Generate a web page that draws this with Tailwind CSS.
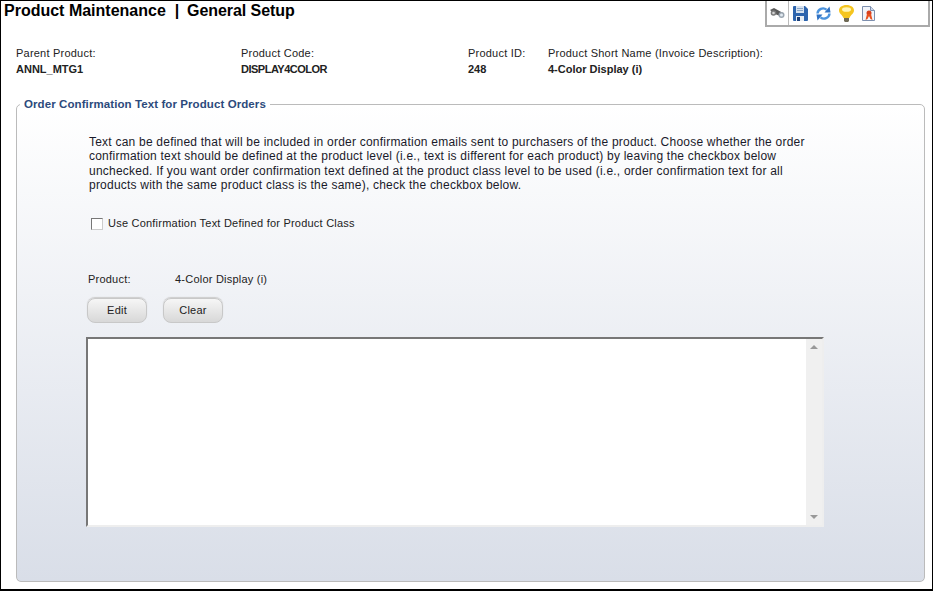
<!DOCTYPE html>
<html lang="en">
<head>
    <meta charset="UTF-8">
    <title>Product Maintenance</title>
    <script src="https://cdn.jsdelivr.net/npm/@tailwindcss/browser@4"></script>
</head>
<body class="bg-white">
<div class="h-[591px] w-[933px] overflow-hidden border border-b-2 border-black bg-white text-[11px] leading-[13px] tracking-[0.22px] text-[#222] font-['Liberation_Sans',Arial,sans-serif]">
    <!-- title + toolbar -->
    <div class="flex justify-between h-[27px]">
        <h1 class="pl-[3px] pt-[1px] text-[16px] leading-[18px] font-bold tracking-normal text-black whitespace-pre">Product Maintenance  |  <span class="-ml-[1px] tracking-[-0.06px]">General Setup</span></h1>
        <div class="flex items-center h-[26px] w-[165px] mr-[2px] border-b-2 border-x-2 border-[#aaa]">
            <div class="flex items-center justify-center w-[22px] h-full border-r border-[#bbb]">
                <svg width="17" height="12" viewBox="0 0 17 12"><path d="M1 3 5 1l9 5-3 3-5-2z" fill="#5a5a5a"/><circle cx="4.500" cy="6" r="2.800" fill="#7a7a7a"/><circle cx="12.500" cy="8" r="3" fill="#9aa5b0"/><circle cx="12.500" cy="8" r="1.500" fill="#e3ebf2"/><circle cx="4.500" cy="6" r="1.300" fill="#d6d6d6"/></svg>
            </div>
            <div class="flex items-center gap-[8px] pl-[4px]">
                <svg width="15" height="15" viewBox="0 0 15 15"><path d="M0 1q0-1 1-1h11l3 3v11q0 1-1 1H1q-1 0-1-1z" fill="#2d64ad"/><path d="M3 0h8v7H3z" fill="#d7e2ef"/><path d="M4 2h6v1H4zM4 4h6v1H4z" fill="#8aa6c8"/><path d="M3 10h8v5H3z" fill="#e8edf3"/><path d="M4 11h3v4H4z" fill="#1c3f78"/></svg>
                <svg width="15" height="15" viewBox="0 0 15 15" fill="none" stroke="#4b93dd" stroke-width="2.400"><path d="M1.500 7.500a5.500 5.500 0 0 1 9-3.800"/><path d="M13.500 7.500a5.500 5.500 0 0 1-9 3.800"/><path d="M8.500 6.500h6l-1-6z" fill="#2f72c4" stroke="none"/><path d="M6.500 8.500h-6l1 6z" fill="#2f72c4" stroke="none"/></svg>
                <svg width="15" height="17" viewBox="0 0 15 17"><path d="M7.500 0c4.500 0 7.500 2.300 7.500 5.500 0 3-3.500 4.500-4.500 7.500h-6C3.500 10 0 8.500 0 5.500 0 2.300 3 0 7.500 0z" fill="#f5c51f"/><ellipse cx="7.500" cy="4.500" rx="4.500" ry="2.300" fill="#fff6b8"/><path d="M5 13h5v3l-1 1H6l-1-1z" fill="#6f6a55"/></svg>
                <svg width="13" height="15" viewBox="0 0 13 15"><path d="M.5.500h8l4 4v10H.5z" fill="#f1f4fa" stroke="#7d8fae"/><path d="M8.500.5v4h4" fill="#cdd8ea" stroke="#7d8fae"/><circle cx="7" cy="7" r="2.500" fill="#d8401e"/><path d="M5 8 3.500 14l2-1 1.500-3 1.500 3 2 1L9 8z" fill="#e8501e"/></svg>
            </div>
        </div>
    </div>

    <!-- product info -->
    <div class="flex pt-[19px] pl-[15px] h-[70px]">
        <div class="w-[225px]"><p class="mb-[3px]">Parent Product:</p><p class="font-bold tracking-normal">ANNL_MTG1</p></div>
        <div class="w-[227px]"><p class="mb-[3px]">Product Code:</p><p class="font-bold tracking-[-0.5px]">DISPLAY4COLOR</p></div>
        <div class="w-[80px]"><p class="mb-[3px]">Product ID:</p><p class="font-bold tracking-normal">248</p></div>
        <div><p class="mb-[3px]">Product Short Name (Invoice Description):</p><p class="font-bold tracking-normal">4-Color Display (i)</p></div>
    </div>

    <!-- confirmation text -->
    <fieldset class="ml-[15px] h-[484px] w-[909px] rounded-[5px] border border-[#bbb] bg-gradient-to-b from-white to-[#d9dee8]">
        <legend class="ml-[3px] px-[4px] text-[11.500px] leading-[13px] font-bold tracking-[0.09px] text-[#2c4a7c]">Order Confirmation Text for Product Orders</legend>
        <div class="pl-[70px]">
            <p class="ml-[2px] mt-[24px] w-[722px] text-[12px] leading-[14.300px] tracking-[0.22px] text-[#1a1a2a]">Text can be defined that will be included in order confirmation emails sent to purchasers of the product. Choose whether the order confirmation text should be defined at the product level (i.e., text is different for each product) by leaving the checkbox below unchecked. If you want order confirmation text defined at the product class level to be used (i.e., order confirmation text for all products with the same product class is the same), check the checkbox below.</p>
            <label class="ml-[4px] mt-[25px] flex items-center gap-[5px]">
                <span class="h-[12px] w-[12px] border border-[#777] border-r-[#ccc] border-b-[#ccc] bg-white"></span>
                <span>Use Confirmation Text Defined for Product Class</span>
            </label>
            <div class="mt-[43px] flex pl-[1px]">
                <span class="w-[87px]">Product:</span>
                <span>4-Color Display (i)</span>
            </div>
            <div class="mt-[12px] flex gap-[16px]">
                <button class="h-[25px] w-[60px] rounded-[8px] border border-[#c8c8c8] bg-gradient-to-b from-[#f6f6f6] to-[#d8d8d8] shadow-[0_-1px_1px_#ccc]">Edit</button>
                <button class="h-[25px] w-[60px] rounded-[8px] border border-[#c8c8c8] bg-gradient-to-b from-[#f6f6f6] to-[#d8d8d8] shadow-[0_-1px_1px_#ccc]">Clear</button>
            </div>
            <div class="-ml-[1px] mt-[14px] flex h-[190px] w-[738px] border-2 border-[#777] border-r-[#eee] border-b-[#eee] bg-white">
                <div class="flex-1"></div>
                <div class="flex w-[16px] flex-col items-center justify-between bg-[#f0f0f0] py-[6px]">
                    <span class="h-0 w-0 border-x-[4px] border-b-[4px] border-x-transparent border-b-[#999]"></span>
                    <span class="h-0 w-0 border-x-[4px] border-t-[4px] border-x-transparent border-t-[#999]"></span>
                </div>
            </div>
        </div>
    </fieldset>
</div>
</body>
</html>
